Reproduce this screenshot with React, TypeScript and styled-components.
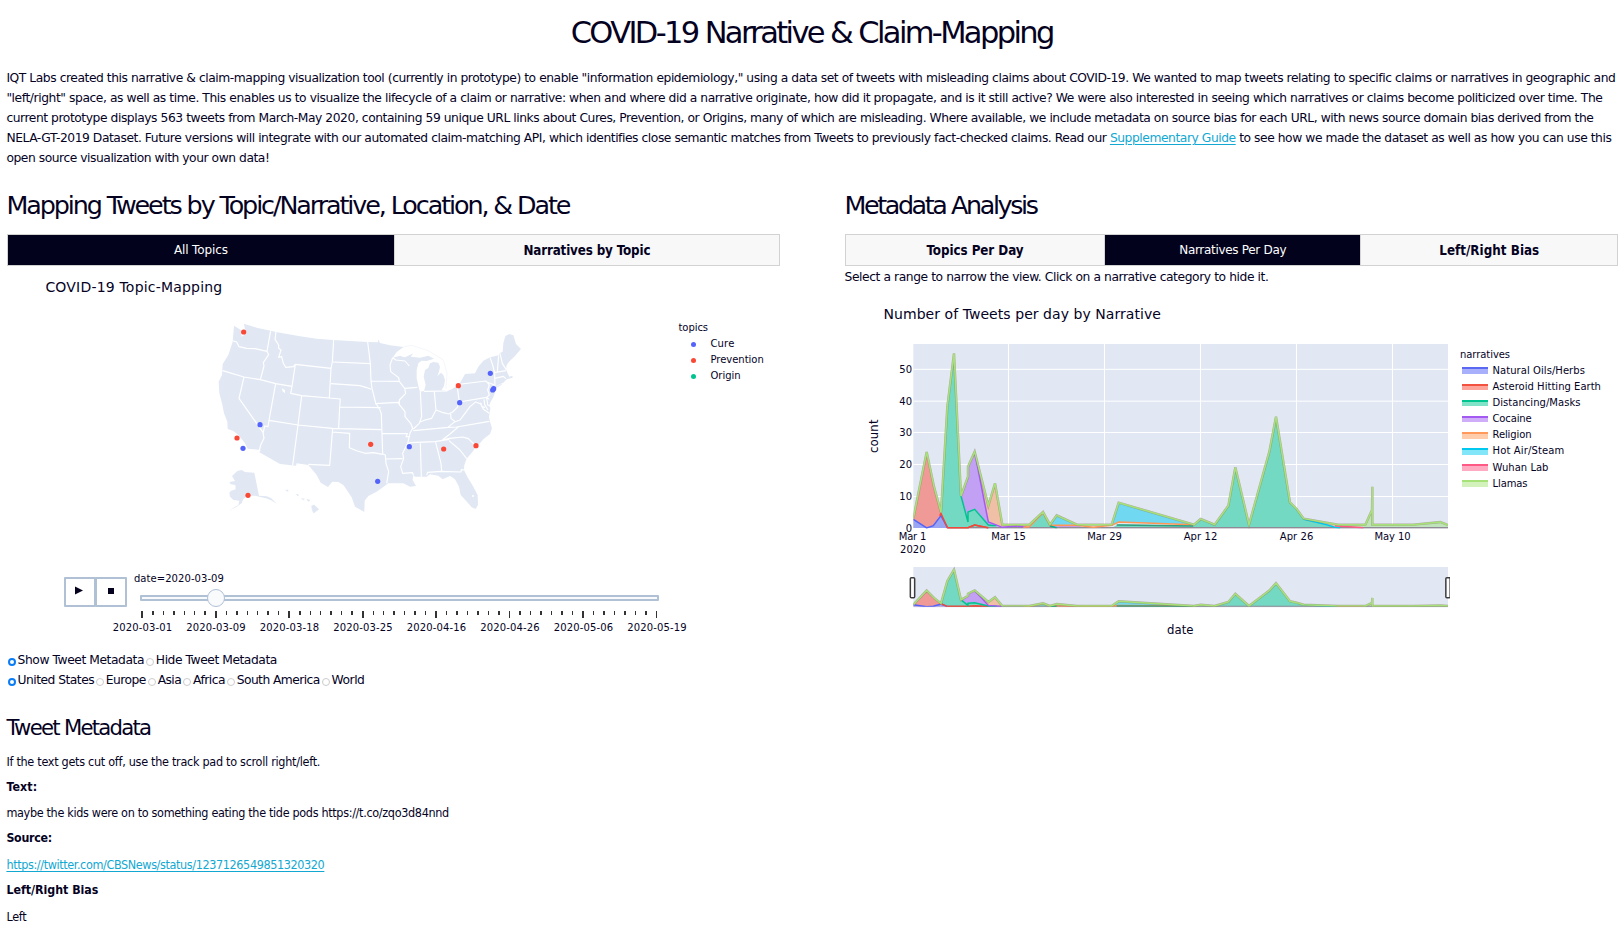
import React, { useLayoutEffect, useRef } from "react";
import styled, { createGlobalStyle } from "styled-components";

const INK = "#04021f";
const LINK = "#12a8d2";
const LAND = "#e1e8f4";
const STEEL = "#b0c0d5";

const GlobalStyle = createGlobalStyle`
  * { box-sizing: border-box; }
  body {
    margin: 0;
    background: #fff;
    color: ${INK};
    font-family: "DejaVu Sans", sans-serif;
    font-size: 12.3px;
    line-height: 20px;
    overflow: hidden;
  }
  p, h1, h2, h3 { margin: 0; font-weight: 400; }
`;

const Measure = styled.span`
  display: inline-block;
  white-space: nowrap;
`;

/* Sets a run of text to an exact measure by adjusting its tracking. */
function Fit({ w, children }: { w: number; children: React.ReactNode }) {
  const ref = useRef<HTMLSpanElement>(null);
  useLayoutEffect(() => {
    const el = ref.current;
    if (!el) return;
    el.style.letterSpacing = "0px";
    const n = (el.textContent || "").length;
    el.style.letterSpacing = `${(w - el.getBoundingClientRect().width) / n}px`;
  }, [w]);
  return <Measure ref={ref}>{children}</Measure>;
}

const Page = styled.main`
  width: 1624px;
  height: 929px;
  padding: 13px 0 0 6.4px;
  overflow: hidden;
`;
const Title = styled.h1`
  font-size: 30.5px;
  line-height: 40px;
  text-align: center;
  padding-right: 7px;
`;
const Intro = styled.p`
  display: flex;
  flex-direction: column;
  align-items: flex-start;
  margin-top: 15px;
`;
const Link = styled.a`
  color: ${LINK};
  text-decoration: underline;
  text-underline-offset: 2px;
`;
const Columns = styled.div`
  display: grid;
  grid-template-columns: 774px 774px;
  column-gap: 64.1px;
  margin-top: 18px;
`;
const Column = styled.section`
  display: flex;
  flex-direction: column;
`;
const Heading = styled.h2`
  font-size: 25.4px;
  line-height: 39px;
  height: 40px;
`;
const Tabs = styled.nav`
  display: flex;
  width: 773px;
  height: 32px;
  margin: 8px 0 0 0.5px;
  border: 1px solid #d2d2d2;
`;
const Tab = styled.button<{ $on?: boolean; $w?: number }>`
  flex: ${(p) => (p.$w ? `0 0 ${p.$w}px` : "1")};
  border: 0;
  border-left: 1px solid #d6d6d6;
  &:first-child { border-left: 0; }
  padding: 0;
  background: ${(p) => (p.$on ? "#02021c" : "#f8f8f8")};
  color: ${(p) => (p.$on ? "#fff" : INK)};
  font: ${(p) => (p.$on ? `400 12px "DejaVu Sans"` : `700 13.3px "DejaVu Sans Condensed"`)}, sans-serif;
`;
const FigureTitle = styled.h3<{ $top: number }>`
  font: 400 14px/20px "DejaVu Sans", sans-serif;
  margin: ${(p) => p.$top}px 0 0 39px;
`;
const MapRow = styled.div`
  display: flex;
  margin-top: 13px;
  height: 210px;
  padding-left: 193.6px;
`;
const MapSvg = styled.svg`
  width: 350px;
  height: 210px;
  margin-right: 128.5px;
`;
const Legend = styled.div<{ $top: number }>`
  font: 400 10px/16px "DejaVu Sans", sans-serif;
  display: flex;
  flex-direction: column;
  margin-top: ${(p) => p.$top}px;
`;
const LegendItem = styled.div<{ $inset: number; $gap: number }>`
  display: flex;
  align-items: center;
  flex: none;
  height: 16.15px;
  padding-left: ${(p) => p.$inset}px;
  gap: ${(p) => p.$gap}px;
`;
const Dot = styled.i<{ $c: string }>`
  width: 5px;
  height: 5px;
  border-radius: 50%;
  background: ${(p) => p.$c};
`;
const Swatch = styled.i<{ $c: string; $f: string }>`
  width: 26px;
  height: 6.5px;
  border-top: 2px solid ${(p) => p.$c};
  background: ${(p) => p.$f};
`;
const Player = styled.div`
  display: flex;
  margin-top: 57px;
  height: 73px;
  padding-left: 57.2px;
  font: 400 10px/14px "DejaVu Sans", sans-serif;
`;
const PlayButton = styled.button`
  width: 32.4px;
  height: 30px;
  margin-right: -1px;
  padding: 0 1px 3px 0;
  border: 2px solid ${STEEL};
  border-radius: 1px;
  background: #fff;
  display: flex;
  align-items: center;
  justify-content: center;
`;
const Slider = styled.div`
  display: flex;
  flex-direction: column;
  margin-left: 7.6px;
  width: 560px;
`;
const DateLabel = styled.div`
  margin-top: -5px;
  height: 22.5px;
`;
const Track = styled.div`
  position: relative;
  width: 519px;
  height: 6.5px;
  margin-left: 6.4px;
  border: 2px solid ${STEEL};
  border-radius: 1px;
  background: #f8fafc;
`;
const Thumb = styled.span`
  position: absolute;
  left: 65px;
  top: -8px;
  width: 18px;
  height: 18px;
  border: 1px solid ${STEEL};
  border-radius: 50%;
  background: #f8fafc;
`;
const Ticks = styled.div`
  display: flex;
  justify-content: space-between;
  width: 516px;
  height: 7px;
  margin: 10px 0 0 7.5px;
`;
const Tick = styled.i<{ $major: boolean }>`
  width: ${(p) => (p.$major ? 1.7 : 1.5)}px;
  height: ${(p) => (p.$major ? 7 : 4)}px;
  background: #333;
`;
const TickLabels = styled.div`
  display: flex;
  width: 588px;
  margin: 3px 0 0 -28.2px;
`;
const TickLabel = styled.span`
  width: 73.5px;
  flex: none;
  text-align: center;
`;
const Radios = styled.div`
  display: flex;
  height: 20px;
  padding-left: 1.6px;
`;
const Option = styled.label`
  display: flex;
  align-items: center;
  margin-right: 2.2px;
`;
const Radio = styled.i<{ $on?: boolean }>`
  width: 8px;
  height: 8px;
  margin: 4.5px 1.6px 0 0;
  border-radius: 50%;
  border: ${(p) => (p.$on ? "2.8px solid #0a7cf8" : "1px solid #ccc")};
  background: #fff;
`;
const SubHeading = styled.h3`
  font-size: 21.2px;
  line-height: 26px;
  margin-top: 24.5px;
`;
const Details = styled.div`
  display: flex;
  flex-direction: column;
  margin-top: 8.3px;
  font-family: "DejaVu Sans Condensed", "DejaVu Sans", sans-serif;
  font-size: 12.5px;
  line-height: 25.85px;
`;
const Strong = styled.b`
  font-size: 12.3px;
`;
const Hint = styled.p`
  margin-top: 0.5px;
`;
const ChartRow = styled.div`
  display: flex;
  margin-top: 6px;
`;
const ChartSvg = styled.svg`
  width: 590px;
  height: 310px;
  margin-left: 15.5px;
  margin-right: 10px;
  font-family: "DejaVu Sans", sans-serif;
  fill: ${INK};
`;

const OUTLINE_WEST =
  "M102 47L118 57L126 62L124 80L132 76L135 60L132 41L170 53L212 62L228 66L300 79L350 86L400 90L503 96L534 97L535 88L540 99L570 106L611 111L590 126L578 143L600 137L608 140L615 142L640 130L632 140L660 143L685 137L702 146L680 153L665 152L655 160L650 180L650 205L656 232L660 245L672 243L677 225L671 200L675 180L685 174L690 160L700 156L715 158L720 170L717 185L712 198L723 188L730 195L735 210L732 228L725 240L740 244L755 238L770 228L778 222L788 205L795 192L825 190L835 170L850 152L870 142L896 136L900 129L908 125L910 100L916 78L928 72L940 76L948 102L963 117L945 138L927 155L920 165L918 178L923 190L928 200L937 197L938 203L920 208L910 218L893 226L885 230L888 240L880 262L872 275L868 285L871 295L867 320L870 335L876 355L870 372L850 388L840 400L828 408L820 422L800 446L793 465L792 480L802 500L820 530L833 555L834 585L827 597L815 592L798 572L782 555L777 530L765 508L750 498L728 508L715 497L690 493L680 500L645 500L640 495L638 510L648 528L630 530L610 520L565 520L558 525L530 545L505 558L494 572L493 606L465 590L455 562L430 525L415 516L397 515L384 531L362 518L350 495L325 465L290 460L288 467L240 462L178 427L182 420L143 416L135 400L115 375L100 363L83 357L82 335L72 310L66 280L58 250L56 215L66 195L68 162L85 135L98 95Z";
const ALASKA =
  "M112 483L125 480L135 486L163 488L177 557L200 559L213 564L231 582L213 571L198 565L165 557L142 558L130 567L125 580L108 592L86 602L115 585L118 572L100 570L90 560L88 548L93 542L107 538L106 525L92 523L88 516L105 513L96 498Z";
const HAWAII =
  "M335 588L342 585L356 598L341 609L337 600ZM257 541L264 540L264 544ZM289 553L295 554L294 558ZM305 566L313 567L311 569ZM321 568L330 571L325 574Z";
const BORDERS_WEST =
  "M98 92L110 96L117 110L140 115L165 116L201 124M212 62L201 124L206 134L190 158L192 168L181 209M68 182L132 201L181 209L227 221L276 229M228 66L225 88L236 105L236 115L243 120L236 142L245 140L250 160L257 172L280 170L286 163M286 163L393 175M286 163L276 229L272 250L305 257L388 264L421 267L419 291L416 355M401 90L397 156L393 175L388 264M399 156L513 161M393 221L480 227L497 232L514 238M419 291L542 293M305 257L294 345L278 466M207 331L294 345L397 355L416 356L544 359M227 221L207 331L204 350L194 348L190 367M132 201L117 265L189 367L192 385L182 405L178 422M398 355L389 466L325 463M397 366L449 370L448 413L470 422L495 430L520 428L548 433";
const BORDERS_EAST =
  "M23 96L31 160L33 213L36 235L47 279L60 300L64 312L66 370L68 432M33 213L117 214M45 281L115 277L118 284M98 143L90 165L92 185L116 203L118 214L134 235M98 143L108 150L135 153L148 168M134 235L137 250L118 270L118 284L135 305L135 320L152 340L158 355L150 370L143 400L128 430L131 446L122 470L128 490L158 488L160 495M134 235L172 232M181 245L185 320L178 340L160 357M223 245L228 300M192 244L262 243M178 337L195 330L215 325L228 300L250 308L266 312L278 306L292 292L298 276L292 232M272 312L273 325L285 335L300 330L315 310L330 290L348 275M298 276L380 262L388 268M295 225L305 222L378 213L388 225L383 240L388 255L380 262M378 215L402 224M390 142L398 165L404 190L405 228M416 136L412 185M420 130L427 160L438 178M402 188L438 182M404 205L430 199L438 206M160 362L265 352L290 351L388 334M285 335L263 352M145 402L150 398L225 395L268 388M296 350L270 372L247 390M66 370L142 371L138 380L150 380M77 447L128 446M181 400L184 500M227 397L243 460L245 483M200 495L203 487L243 484L303 486L304 479L312 480M267 392L300 420L320 446M245 392L268 385L308 381L325 386L348 408M68 432L76 435L78 460L86 485L80 520M380 262L383 285L394 290M348 276L362 282L370 298L388 310M362 278L366 290L375 292M372 268L374 284L384 300";

const CURE = [[180, 344], [129, 415], [871, 190], [881, 236], [878, 240], [779, 278], [628, 410], [533, 514]];
const PREVENTION = [[131, 66], [111, 384], [144, 556], [512, 403], [775, 227], [731, 417], [828, 407]];

function UsMap() {
  return (
    <MapSvg viewBox="0 0 1050 630">
      <path d="M611 111L635 106L685 122L730 150L741 190L738 236" fill="none" stroke="#f4f7fb" strokeWidth="3" />
      <path d={OUTLINE_WEST} fill={LAND} />
      <path d={ALASKA} fill={LAND} />
      <path d={HAWAII} fill={LAND} stroke={LAND} strokeWidth="2" />
      <path d="M884 232L905 223L890 232Z" fill={LAND} stroke={LAND} strokeWidth="2" />
      <g fill="none" stroke="#fff" strokeWidth="3.4" strokeLinejoin="round">
        <path d={BORDERS_WEST} />
        <path d={BORDERS_EAST} transform="translate(480 0)" />
      </g>
      <path d="M245 235L255 240L255 250L248 244Z" fill="#fff" />
      <circle cx="819" cy="558" r="3" fill="#fff" />
      {CURE.map(([x, y]) => <circle key={`${x}-${y}`} cx={x} cy={y} r="7.8" fill="#5463fa" />)}
      {PREVENTION.map(([x, y]) => <circle key={`${x}-${y}`} cx={x} cy={y} r="7.8" fill="#fa4836" />)}
    </MapSvg>
  );
}

const TOTAL =
  "160 565 200 366 222 470 243 547 262 230 282 70 303 498 324 440 324 410 344 365 385 527 405 460 427 584 508 584 549 546 570 584 590 556 651 584 755 584 776 518 1002 584 1022 567 1064 584 1105 527 1126 412 1167 584 1228 365 1248 260 1290 517 1310 537 1331 566 1434 584 1516 584 1536 540 1537 470 1537 584 1660 584 1741 576 1764 585";

const AREAS: [string, string][] = [
  ["#ef9a97", "160 565 200 366 222 470 243 547 262 594 160 594"],
  ["#9aa5f3", "160 568 200 594 220 587 243 557 262 594 160 594"],
  ["#73d9c2", "243 547 262 230 282 70 303 498 324 576 324 546 344 538 385 585 427 594 262 594"],
  ["#c2a0f3", "303 498 324 440 324 410 344 365 385 576 405 584 427 592 385 585 344 538 324 546 324 576"],
  ["#f0c0a6", "344 365 385 527 405 460 427 584 508 584 508 592 427 592 405 584 385 576"],
  ["#73d9c2", "508 592 549 546 570 584 570 594 508 594"],
  ["#70d8f0", "570 584 590 556 651 584 590 585"],
  ["#c99ae0", "570 586 651 586 680 594 570 594"],
  ["#70d8f0", "755 584 776 518 1002 584 776 576"],
  ["#73d9c2", "755 594 776 583 1002 587 1022 567 1064 584 1105 527 1126 412 1167 584 1228 365 1248 260 1290 517 1310 537 1331 566 1430 594"],
  ["#f0c0a6", "1331 566 1434 584 1516 590 1425 590"],
  ["#bfe3bb", "1425 586 1516 584 1536 540 1537 584 1660 584 1741 576 1764 585 1764 594 1425 594"],
];

const LINES: [string, string][] = [
  ["#5463fa", "160 568 200 594 220 587 243 557 262 592"],
  ["#f0483a", "239 557 243 550 262 593 324 593 344 585 385 594"],
  ["#8f8a96", "262 593 1764 593"],
  ["#f0483a", "262 593 324 593 344 585 385 593"],
  ["#00c48f", "303 498 324 576 324 546 344 538 385 585 410 587"],
  ["#a35af5", "344 366 385 576 427 592 470 588 500 592"],
  ["#ff9655", "490 592 508 590 549 548 570 586 651 586 700 592 755 586 776 576 1002 584"],
  ["#00b38a", "570 588 590 593"],
  ["#2f9e80", "770 585 1000 588"],
  ["#00c8ef", "1331 568 1400 584 1425 592 1440 593"],
  ["#ff5a85", "1425 588 1470 590 1510 593"],
];

function Series() {
  return (
    <g fill="none" strokeWidth="1.5">
      {AREAS.map(([c, p]) => <polygon key={p} points={p} fill={c} />)}
      {LINES.map(([c, p]) => (
        <polyline key={c + p} points={p} stroke={c} vectorEffect="non-scaling-stroke" />
      ))}
      <polyline points={TOTAL} stroke="#8f8466" strokeOpacity="0.6" strokeWidth="2.4" vectorEffect="non-scaling-stroke" />
      <polyline points={TOTAL} stroke="#a6e277" strokeWidth="1.5" vectorEffect="non-scaling-stroke" />
    </g>
  );
}

const Y_TICKS: [number, number][] = [[50, 118], [40, 213.5], [30, 307.5], [20, 403.5], [10, 499.5]];
const X_TICKS: [string, number, number][] = [
  ["Mar 15", 445.5, 34.7],
  ["Mar 29", 733.5, 34.7],
  ["Apr 12", 1021.5, 33.7],
  ["Apr 26", 1309.5, 33.5],
  ["May 10", 1597.5, 36],
];

function NarrativeChart() {
  return (
    <ChartSvg viewBox="0 0 590 310">
      <defs>
        <clipPath id="plot"><rect x="160" y="0" width="1604" height="596" /></clipPath>
      </defs>
      <g transform="scale(0.333333)">
        <rect x="160" y="42" width="1604" height="552" fill="#e1e8f4" />
        <g stroke="#fff" strokeWidth="3">
          {Y_TICKS.map(([v, y]) => <path key={v} d={`M160 ${y}H1764`} />)}
          {X_TICKS.map(([l, x]) => <path key={l} d={`M${x} 42V594`} />)}
        </g>
        <g clipPath="url(#plot)"><Series /></g>
        <rect x="160" y="711" width="1604" height="121" fill="#e1e8f4" />
        <g transform="matrix(1 0 0 0.2118 0 704.2)" clipPath="url(#plot)"><Series /></g>
        {[157.5, 1764].map((x) => (
          <rect key={x} x={x - 6.5} y="743" width="13" height="60" rx="3" fill="#fff" stroke="#3d3d3d" strokeWidth="4.5" />
        ))}
      </g>
      <g fontSize="10">
        {Y_TICKS.map(([v, y]) => (
          <text key={v} x="52" y={y / 3 + 3.7} textAnchor="end">{v}</text>
        ))}
        <text x="52" y="202.3" textAnchor="end">0</text>
        <text x="38.8" y="210" textLength="27.5">Mar 1</text>
        <text x="40" y="223" textLength="25.5">2020</text>
        {X_TICKS.map(([l, x, w]) => (
          <text key={l} x={x / 3 - w / 2} y="210" textLength={w}>{l}</text>
        ))}
      </g>
      <text fontSize="11.7" transform="translate(17.5 123) rotate(-90)" textLength="33.5">count</text>
      <text fontSize="11.7" x="307" y="303.5" textLength="26.5">date</text>
    </ChartSvg>
  );
}

const TOPICS: [string, string, number][] = [
  ["Cure", "#5463fa", 24],
  ["Prevention", "#fa4836", 53.3],
  ["Origin", "#00c48f", 30],
];
const NARRATIVES: [string, string, string, number][] = [
  ["Natural Oils/Herbs", "#5b68f2", "#a9b0fb", 92.5],
  ["Asteroid Hitting Earth", "#f2523f", "#fea59b", 108.5],
  ["Distancing/Masks", "#00c48f", "#80e3c8", 88],
  ["Cocaine", "#a35af0", "#d0adf8", 39],
  ["Religion", "#ff9a5c", "#ffccac", 39],
  ["Hot Air/Steam", "#00c8ef", "#82e5f8", 72],
  ["Wuhan Lab", "#ff5a85", "#ffacc2", 56],
  ["Llamas", "#a6e277", "#d2f1bb", 35],
];
const DATES = ["2020-03-01", "2020-03-09", "2020-03-18", "2020-03-25", "2020-04-16", "2020-04-26", "2020-05-06", "2020-05-19"];
const REGIONS: [string, number][] = [
  ["United States", 76.5],
  ["Europe", 40],
  ["Asia", 23.5],
  ["Africa", 32],
  ["South America", 83],
  ["World", 33],
];

export default function App() {
  return (
    <Page>
      <GlobalStyle />
      <Title><Fit w={482}>COVID-19 Narrative &amp; Claim-Mapping</Fit></Title>
      <Intro>
        <Fit w={1609}>IQT Labs created this narrative &amp; claim-mapping visualization tool (currently in prototype) to enable "information epidemiology," using a data set of tweets with misleading claims about COVID-19. We wanted to map tweets relating to specific claims or narratives in geographic and</Fit>
        <Fit w={1596}>"left/right" space, as well as time. This enables us to visualize the lifecycle of a claim or narrative: when and where did a narrative originate, how did it propagate, and is it still active? We were also interested in seeing which narratives or claims become politicized over time. The</Fit>
        <Fit w={1587}>current prototype displays 563 tweets from March-May 2020, containing 59 unique URL links about Cures, Prevention, or Origins, many of which are misleading. Where available, we include metadata on source bias for each URL, with news source domain bias derived from the</Fit>
        <Fit w={1605}>NELA-GT-2019 Dataset. Future versions will integrate with our automated claim-matching API, which identifies close semantic matches from Tweets to previously fact-checked claims. Read our <Link>Supplementary Guide</Link> to see how we made the dataset as well as how you can use this</Fit>
        <Fit w={263}>open source visualization with your own data!</Fit>
      </Intro>
      <Columns>
        <Column>
          <Heading><Fit w={563}>Mapping Tweets by Topic/Narrative, Location, &amp; Date</Fit></Heading>
          <Tabs>
            <Tab $on $w={386}><Fit w={54}>All Topics</Fit></Tab>
            <Tab><Fit w={127}>Narratives by Topic</Fit></Tab>
          </Tabs>
          <FigureTitle $top={11}><Fit w={177}>COVID-19 Topic-Mapping</Fit></FigureTitle>
          <MapRow>
            <UsMap />
            <Legend $top={10}>
              <LegendItem $inset={0} $gap={0}><Fit w={29.5}>topics</Fit></LegendItem>
              {TOPICS.map(([label, c, w]) => (
                <LegendItem key={label} $inset={12.5} $gap={14.5}><Dot $c={c} /><Fit w={w}>{label}</Fit></LegendItem>
              ))}
            </Legend>
          </MapRow>
          <Player>
            <PlayButton><svg width="8" height="9"><path d="M0 .5L8 4.5L0 8.5Z" fill={INK} /></svg></PlayButton>
            <PlayButton><svg width="6" height="6"><path d="M0 0H6V6H0Z" fill={INK} /></svg></PlayButton>
            <Slider>
              <DateLabel><Fit w={90}>date=2020-03-09</Fit></DateLabel>
              <Track><Thumb /></Track>
              <Ticks>{Array.from({ length: 50 }, (_, i) => <Tick key={i} $major={i % 7 === 0} />)}</Ticks>
              <TickLabels>{DATES.map((d) => <TickLabel key={d}><Fit w={59.5}>{d}</Fit></TickLabel>)}</TickLabels>
            </Slider>
          </Player>
          <Radios>
            <Option><Radio $on /><Fit w={126.5}>Show Tweet Metadata</Fit></Option>
            <Option><Radio /><Fit w={121}>Hide Tweet Metadata</Fit></Option>
          </Radios>
          <Radios>
            {REGIONS.map(([label, w], i) => (
              <Option key={label}><Radio $on={i === 0} /><Fit w={w}>{label}</Fit></Option>
            ))}
          </Radios>
          <SubHeading><Fit w={144}>Tweet Metadata</Fit></SubHeading>
          <Details>
            <p><Fit w={313.5}>If the text gets cut off, use the track pad to scroll right/left.</Fit></p>
            <Strong><Fit w={31}>Text:</Fit></Strong>
            <p><Fit w={442.5}>maybe the kids were on to something eating the tide pods https://t.co/zqo3d84nnd</Fit></p>
            <Strong><Fit w={45.5}>Source:</Fit></Strong>
            <p><Fit w={318}><Link>https://twitter.com/CBSNews/status/1237126549851320320</Link></Fit></p>
            <Strong><Fit w={92}>Left/Right Bias</Fit></Strong>
            <p><Fit w={20}>Left</Fit></p>
          </Details>
        </Column>
        <Column>
          <Heading><Fit w={192}>Metadata Analysis</Fit></Heading>
          <Tabs>
            <Tab $w={258}><Fit w={97}>Topics Per Day</Fit></Tab>
            <Tab $on><Fit w={107}>Narratives Per Day</Fit></Tab>
            <Tab><Fit w={100}>Left/Right Bias</Fit></Tab>
          </Tabs>
          <Hint><Fit w={424}>Select a range to narrow the view. Click on a narrative category to hide it.</Fit></Hint>
          <FigureTitle $top={17}><Fit w={277.5}>Number of Tweets per day by Narrative</Fit></FigureTitle>
          <ChartRow>
            <NarrativeChart />
            <Legend $top={17}>
              <LegendItem $inset={0} $gap={0}><Fit w={50}>narratives</Fit></LegendItem>
              {NARRATIVES.map(([label, c, f, w]) => (
                <LegendItem key={label} $inset={2.5} $gap={4}><Swatch $c={c} $f={f} /><Fit w={w}>{label}</Fit></LegendItem>
              ))}
            </Legend>
          </ChartRow>
        </Column>
      </Columns>
    </Page>
  );
}
